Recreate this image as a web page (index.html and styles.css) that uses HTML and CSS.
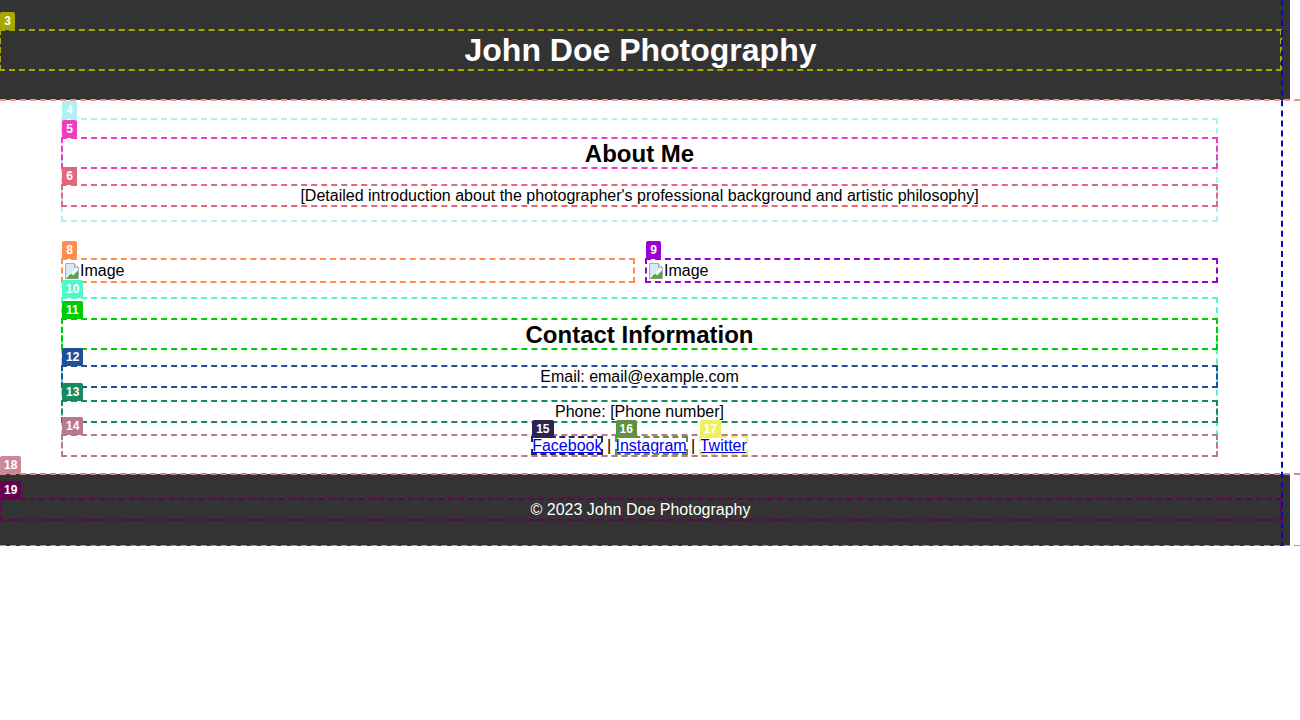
FILE: index.html
```html
<!DOCTYPE html>
<html lang="en">
<head>
<meta charset="utf-8">
<title>John Doe Photography</title>
<link rel="stylesheet" href="styles.css">
</head>
<body>
<div class="page">
  <header class="site-header">
    <h1 class="title box b3"><span class="tag t3">3</span>John Doe Photography</h1>
  </header>
  <main class="main">
    <section class="about box b4"><span class="tag t4">4</span>
      <h2 class="heading box b5"><span class="tag t5">5</span>About Me</h2>
      <p class="text box b6"><span class="tag t6">6</span>[Detailed introduction about the photographer's professional background and artistic philosophy]</p>
    </section>
    <section class="gallery">
      <div class="img box b8"><span class="tag t8">8</span><svg class="broken" viewBox="0 0 16 18" width="16" height="18"><path d="M1.5 1.5h9l4 4v11h-13z" fill="#f4f6f8" stroke="#a3abb4"/><path d="M10.5 1.5v4h4" fill="#e2e6ea" stroke="#a3abb4"/><path d="M2 16.5l5-5 2 2 5-5v8z" fill="#52a83e"/><path d="M2 2h8v6l-8 7z" fill="#d4e8f6"/></svg>Image</div>
      <div class="img box b9"><span class="tag t9">9</span><svg class="broken" viewBox="0 0 16 18" width="16" height="18"><path d="M1.5 1.5h9l4 4v11h-13z" fill="#f4f6f8" stroke="#a3abb4"/><path d="M10.5 1.5v4h4" fill="#e2e6ea" stroke="#a3abb4"/><path d="M2 16.5l5-5 2 2 5-5v8z" fill="#52a83e"/><path d="M2 2h8v6l-8 7z" fill="#d4e8f6"/></svg>Image</div>
    </section>
    <section class="contact box b10"><span class="tag t10">10</span>
      <h2 class="heading box b11"><span class="tag t11">11</span>Contact Information</h2>
      <p class="text email box b12"><span class="tag t12">12</span>Email: email@example.com</p>
      <p class="text phone box b13"><span class="tag t13">13</span>Phone: [Phone number]</p>
      <p class="text links box b14"><span class="tag t14">14</span><a href="#" class="link box b15"><span class="tag t15">15</span>Facebook</a> | <a href="#" class="link box b16"><span class="tag t16">16</span>Instagram</a> | <a href="#" class="link box b17"><span class="tag t17">17</span>Twitter</a></p>
    </section>
  </main>
  <footer class="site-footer box"><span class="tag t18">18</span>
    <p class="foot box b19"><span class="tag t19">19</span>© 2023 John Doe Photography</p>
  </footer>
  <div class="frame"></div>
</div>
</body>
</html>
```
FILE: styles.css
```css
* { box-sizing: border-box; }
html, body { margin: 0; padding: 0; }
body {
  font-family: "Liberation Sans", Arial, sans-serif;
  font-size: 16px;
  color: #000;
  background: #fff;
  overflow: hidden;
}
.page { position: relative; width: 1300px; }

.box { position: relative; }
.tag {
  position: absolute;
  left: 0;
  top: -18px;
  height: 18px;
  min-width: 15px;
  padding: 0 4px;
  border-radius: 2px;
  font: bold 12px/18px "Liberation Sans", Arial, sans-serif;
  color: #fff;
  text-align: center;
  text-decoration: none;
  z-index: 2;
}

.site-header {
  width: 1290px;
  height: 100px;
  background: #333;
  padding-top: 30px;
}
.title {
  width: 1281px;
  margin: 0;
  height: 40px;
  line-height: 41px;
  font-size: 32px;
  font-weight: bold;
  color: #fff;
  text-align: center;
}

.main {
  position: relative;
  padding: 19px 0 18px;
}
.main::before {
  content: "";
  position: absolute;
  left: 0; top: -1px;
  width: 1300px;
  border-top: 2px dashed #f4948c;
}

.about, .contact, .gallery {
  width: 1155px;
  margin-left: 62px;
}
.about { height: 102px; padding-top: 19px; }
.heading {
  margin: 0;
  height: 30px;
  line-height: 31px;
  font-size: 24px;
  font-weight: bold;
  text-align: center;
}
.text {
  margin: 0;
  height: 21px;
  line-height: 22px;
  text-align: center;
}
.about .text { margin-top: 17px; }

.gallery {
  margin-top: 38px;
  display: grid;
  grid-template-columns: 572px 571px;
  column-gap: 12px;
}
.img {
  height: 23px;
  line-height: 22px;
  padding-left: 2px;
  display: flex;
  align-items: center;
}
.broken { flex: none; }

.contact { margin-top: 16px; padding-top: 21px; height: 158px; }
.contact .email { margin-top: 17px; }
.contact .phone { margin-top: 14px; }
.contact .links { margin-top: 13px; }
.link { color: #0000ee; text-decoration: underline; }
.link .tag { top: -17px; }

.site-footer {
  width: 1300px;
  height: 72px;
  padding-top: 25px;
  background: linear-gradient(to right, #333 1290px, transparent 1290px);
}
.site-footer::before,
.site-footer::after {
  content: "";
  position: absolute;
  left: 0;
  width: 1300px;
  border-top: 2px dashed #cc8898;
}
.site-footer::before { top: -1px; }
.site-footer::after { bottom: -1px; }
.foot {
  margin: 0;
  width: 1281px;
  height: 21px;
  line-height: 22px;
  text-align: center;
  color: #fff;
}

.frame {
  position: absolute;
  left: 0; top: 0;
  width: 1283px;
  height: 548px;
  border-right: 2px dashed #0a0ab8;
  border-bottom: 2px dashed #0a0ab8;
  pointer-events: none;
  z-index: 3;
}

/* debug overlay outlines */
.b3 { outline: 2px dashed #a8a800; outline-offset: -1px; }
.b4 { outline: 2px dashed #aef0f4; outline-offset: -1px; }
.b5 { outline: 2px dashed #f03cc0; outline-offset: -1px; }
.b6 { outline: 2px dashed #e0687a; outline-offset: -1px; }
.b8 { outline: 2px dashed #ff8c50; outline-offset: -1px; }
.b9 { outline: 2px dashed #9b00d0; outline-offset: -1px; }
.b10 { outline: 2px dashed #50f8c8; outline-offset: -1px; }
.b11 { outline: 2px dashed #00cc00; outline-offset: -1px; }
.b12 { outline: 2px dashed #20509a; outline-offset: -1px; }
.b13 { outline: 2px dashed #158a60; outline-offset: -1px; }
.b14 { outline: 2px dashed #b87890; outline-offset: -1px; }
.b15 { outline: 2px dashed #2c2450; outline-offset: -1px; }
.b16 { outline: 2px dashed #609040; outline-offset: -1px; }
.b17 { outline: 2px dashed #eef060; outline-offset: -1px; }
.b19 { outline: 2px dashed #660050; outline-offset: -1px; }

.t3 { background: #a8a800; }
.t4 { background: #aef0f4; }
.t5 { background: #f03cc0; }
.t6 { background: #e0687a; }
.t8 { background: #ff8c50; }
.t9 { background: #9b00d0; }
.t10 { background: #50f8c8; }
.t11 { background: #00cc00; }
.t12 { background: #20509a; }
.t13 { background: #158a60; }
.t14 { background: #b87890; }
.t15 { background: #2c2450; }
.t16 { background: #609040; }
.t17 { background: #eef060; }
.t18 { background: #cc8898; }
.t19 { background: #660050; }
```
